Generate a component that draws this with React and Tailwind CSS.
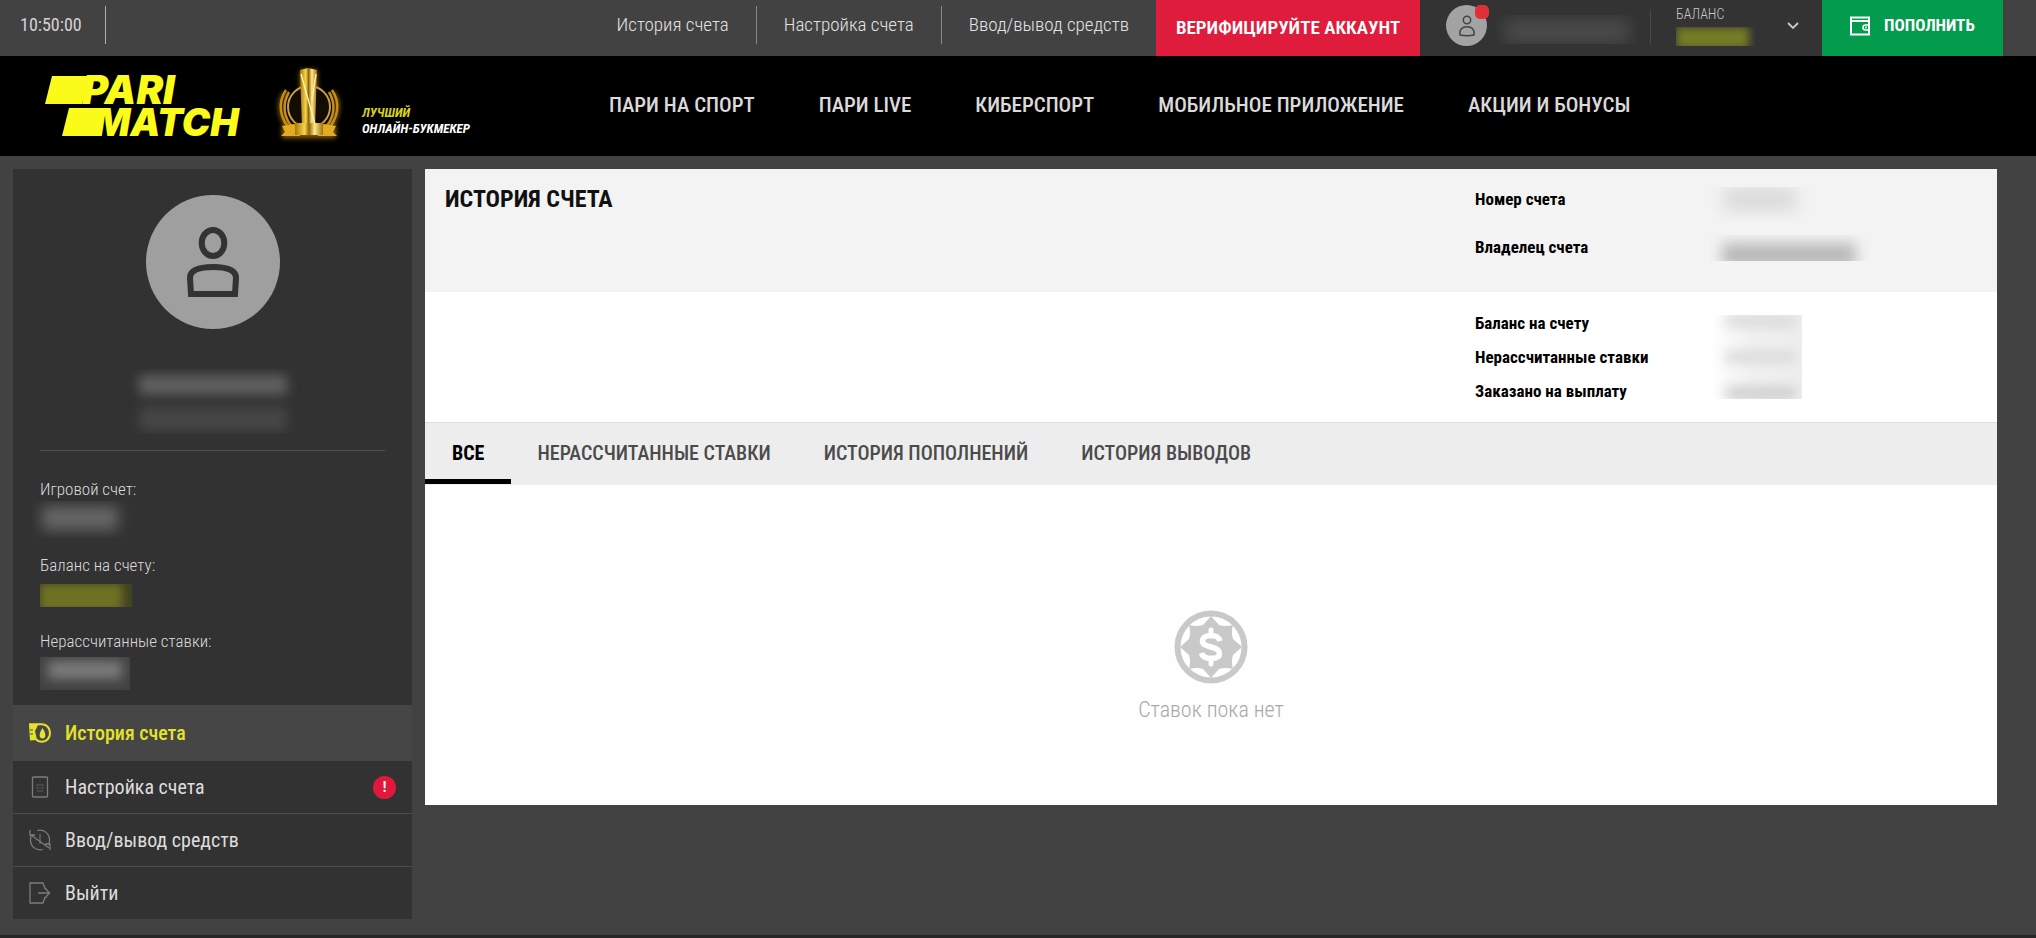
import React from "react";

const topLinks = ["История счета", "Настройка счета", "Ввод/вывод средств"];
const navLinks = ["ПАРИ НА СПОРТ", "ПАРИ LIVE", "КИБЕРСПОРТ", "МОБИЛЬНОЕ ПРИЛОЖЕНИЕ", "АКЦИИ И БОНУСЫ"];
const tabs = ["ВСЕ", "НЕРАССЧИТАННЫЕ СТАВКИ", "ИСТОРИЯ ПОПОЛНЕНИЙ", "ИСТОРИЯ ВЫВОДОВ"];

function Person({ className }) {
  return (
    <svg viewBox="0 0 52 70" className={className} fill="none" stroke="currentColor" strokeWidth="6" aria-hidden="true">
      <ellipse cx="26" cy="16" rx="11.3" ry="13" />
      <path d="M4 67 L3 51 C3 43 12 40 26 40 C40 40 49 43 49 51 L48 67 Z" />
    </svg>
  );
}

function SmallPerson({ className }) {
  return (
    <svg viewBox="0 0 16 22" className={className} fill="none" stroke="currentColor" strokeWidth="1.5" aria-hidden="true">
      <circle cx="8" cy="5" r="3.7" />
      <path d="M1 20 C0.4 14.5 3 11.7 8 11.7 C13 11.7 15.6 14.5 15 20 Q8 21.4 1 20 Z" />
    </svg>
  );
}

function Logo() {
  return (
    <svg viewBox="0 -10 202 84" className="h-[84px] w-[202px] shrink-0 overflow-visible fill-[#fbfb1a]" role="img" aria-label="Parimatch">
      <path d="M8 2 H46 L38 30 H1 Z" />
      <path d="M25 34 H62 L56 62 H18 Z" />
      <text x="38" y="30" className="font-['Inter',sans-serif] text-[40px] font-black italic">PARI</text>
      <text x="50" y="62" className="font-['Inter',sans-serif] text-[38px] font-black italic">MATCH</text>
    </svg>
  );
}

function Trophy() {
  return (
    <svg viewBox="0 0 70 80" className="h-20 w-[70px] shrink-0" aria-hidden="true">
      <defs>
        <linearGradient id="gold" x1="0" x2="1" y1="0" y2="0">
          <stop offset="0" stopColor="#a8780c" />
          <stop offset="0.35" stopColor="#f7d64a" />
          <stop offset="0.5" stopColor="#8f6408" />
          <stop offset="0.7" stopColor="#ffe98a" />
          <stop offset="1" stopColor="#a06e0a" />
        </linearGradient>
        <filter id="glow" x="-20%" y="-20%" width="140%" height="140%">
          <feGaussianBlur stdDeviation="2.4" />
        </filter>
      </defs>
      <g filter="url(#glow)" stroke="#b78410" strokeWidth="3" fill="none">
        <path d="M26 4 H43 L45 60 H62 V72 H8 V60 H26 Z" fill="#8a6208" stroke="none" />
        <path d="M11 26 C3 38 6 52 16 64 M59 26 C67 38 64 52 54 64" />
      </g>
      <circle cx="35" cy="41" r="21" fill="#120c02" stroke="#c9a04a" strokeWidth="2" />
      <path d="M12 24 C3 37 6 53 17 64 M15 26 C8 38 9 52 20 63 M58 24 C67 37 64 53 53 64 M55 26 C62 38 61 52 50 63" fill="none" stroke="#c58c18" strokeWidth="2.5" />
      <path d="M26 4 L34 2 L43 4 L41 62 H28 Z" fill="url(#gold)" />
      <path d="M27 8 L41 58 M42 8 L38 34" stroke="#fff3b0" strokeWidth="1.4" fill="none" />
      <path d="M8 60 L20 58 L26 62 V70 H7 L11 66 Z M62 60 L50 58 L44 62 V70 H63 L59 66 Z" fill="#e2ac20" />
      <path d="M21 57 H49 V69 H21 Z" fill="url(#gold)" />
    </svg>
  );
}

function HistoryIcon() {
  return (
    <svg viewBox="0 0 22 20" className="h-5 w-[22px]" fill="none" stroke="currentColor" aria-hidden="true">
      <path d="M0 1.2 H13 C18 1.4 21 5.5 21 10 C21 15 17.500 18.800 13 18.800 C10 18.800 8 17.500 7 16" strokeWidth="2" />
      <path d="M0 2 H9 L6 8 L8 17 L1 17.500 Z" fill="currentColor" stroke="none" />
      <path d="M1 7 H4 M1 11 H4" stroke="#464646" strokeWidth="1" />
      <path d="M13.500 5 C17 10 17.500 15.500 13.500 15.500 C9.500 15.500 10 10 13.500 5 Z" fill="currentColor" stroke="none" />
    </svg>
  );
}

function SettingsIcon() {
  return (
    <svg viewBox="0 0 22 22" className="size-[22px]" fill="none" stroke="currentColor" aria-hidden="true">
      <rect x="3.500" y="1" width="15" height="20" rx="1" strokeWidth="1.300" />
      <path d="M7 9 H15 M7 12 H10 M12 12 H15 M8 15 H14" strokeWidth="1" opacity="0.6" />
    </svg>
  );
}

function TransferIcon() {
  return (
    <svg viewBox="0 0 22 22" className="size-[22px]" fill="none" stroke="currentColor" strokeWidth="1.300" aria-hidden="true">
      <path d="M1 1 V6 H6 M2 6 L20 19 M21 21 V15 H16" />
      <path d="M8 1.500 C15 -0.500 21 5 20.500 12 C20.400 13.500 20 15 19.300 16 M14 20.500 C7 22.500 1 17 1.500 10 L2 7" />
      <path d="M11 5 V15" strokeWidth="1" />
    </svg>
  );
}

function ExitIcon() {
  return (
    <svg viewBox="0 0 22 22" className="size-[22px]" fill="none" stroke="currentColor" strokeWidth="1.300" aria-hidden="true">
      <path d="M16 7 L14 1 H1 V21 H14 L16 15 M9 11 H20 M16 6 L20.500 11 L16 16" />
    </svg>
  );
}

function WalletIcon() {
  return (
    <svg viewBox="0 0 20 20" className="size-5" fill="none" stroke="currentColor" aria-hidden="true">
      <path d="M1 4 V18.500 H19 V1.500 H1 V5 H19" strokeWidth="2" />
      <path d="M19 9 H15.500 A2.500 2.500 0 0 0 15.500 14 H19" strokeWidth="1.600" />
      <circle cx="16" cy="11.500" r="1" fill="currentColor" stroke="none" />
    </svg>
  );
}

function ChipIcon() {
  return (
    <svg viewBox="0 0 74 74" className="size-[74px]" aria-hidden="true">
      <circle cx="37" cy="37" r="33.500" fill="#fff" stroke="#c9c9c9" strokeWidth="6" />
      <path d="M37 6 L45 15 Q51 17 59 15 Q57 23 59 29 L68 37 L59 45 Q57 51 59 59 Q51 57 45 59 L37 68 L29 59 Q23 57 15 59 Q17 51 15 45 L6 37 L15 29 Q17 23 15 15 Q23 17 29 15 Z" fill="#c9c9c9" />
      <path d="M46 31 C45 27 42 25.500 37 25.500 C31.500 25.500 28.500 28 28.500 31 C28.500 34.500 31.500 35.500 37 37 C43 38.500 45.500 40 45.500 43.500 C45.500 47 42 48.500 37 48.500 C32 48.500 28.500 47 27.500 43" fill="none" stroke="#fff" strokeWidth="5.500" />
      <path d="M37 20 V26 M37 48 V54" stroke="#fff" strokeWidth="5" strokeLinecap="round" />
    </svg>
  );
}

const menu = [
  { label: "История счета", Icon: HistoryIcon },
  { label: "Настройка счета", Icon: SettingsIcon, badge: true },
  { label: "Ввод/вывод средств", Icon: TransferIcon },
  { label: "Выйти", Icon: ExitIcon },
];

function TopBar() {
  return (
    <div className="flex h-14 items-stretch pr-[33px]">
      <div className="flex flex-1 items-start pt-[6px]">
        <time className="h-[38px] w-[106px] border-r border-[#b0b0b0] pl-5 text-[18px] leading-[38px] text-[#d4d4d4]">10:50:00</time>
      </div>
      <nav className="flex items-start pt-[6px] text-[19px] leading-[38px] font-light text-[#e2e2e2]" aria-label="Аккаунт">
        {topLinks.map((label, i) => (
          <a key={label} href="#" className={"px-[27px] whitespace-nowrap " + (i ? "border-l border-[#8a8a8a]" : "")}>{label}</a>
        ))}
      </nav>
      <button className="w-[264px] bg-[#e01c3c] text-[19px] font-semibold text-white">ВЕРИФИЦИРУЙТЕ АККАУНТ</button>
      <button className="flex w-[402px] items-start bg-[#333333] pl-[26px] text-left text-[#c8c8c8]" aria-label="Меню аккаунта">
        <span className="relative mt-[5px] flex size-[41px] items-center justify-center rounded-full bg-[#a3a3a3]">
          <SmallPerson className="h-[22px] w-4 text-[#444444]" />
          <span className="absolute top-0 -right-[2px] size-[14px] rounded-[5px] bg-[#e12f3a]" />
        </span>
        <span className="mt-[15px] ml-[8px] h-[29px] w-[144px] overflow-hidden">
          <span className="mx-[10px] mt-[4px] block h-6 rounded bg-[#4b4b4b] blur-[8px]" />
        </span>
        <span className="mt-[10px] ml-[11px] h-[35px] w-px bg-[#4a4a4a]" />
        <span className="ml-[25px] flex w-[79px] flex-col pt-[6px] text-[14px] leading-4 font-light">
          БАЛАНС
          <span className="mt-[5px] block h-[19px] overflow-hidden">
            <span className="mr-[6px] block h-[22px] bg-[#767b26] blur-[4px]" />
          </span>
        </span>
        <svg viewBox="0 0 12 8" className="mt-[22px] ml-[32px] h-2 w-3" fill="none" stroke="currentColor" strokeWidth="1.800" aria-hidden="true">
          <path d="M1 1 L6 6 L11 1" />
        </svg>
      </button>
      <button className="flex w-[181px] items-center gap-[14px] bg-[#039b4c] pb-[5px] pl-7 text-[17px] font-bold text-white">
        <WalletIcon />
        ПОПОЛНИТЬ
      </button>
    </div>
  );
}

function Stat({ label, children }) {
  return (
    <div>
      <dt className="text-[17px] leading-6 font-light text-[#dadada]">{label}</dt>
      <dd className="flex h-[52px] items-start">{children}</dd>
    </div>
  );
}

function Sidebar() {
  return (
    <aside className="w-[399px] shrink-0 bg-[#323232]">
      <div className="flex h-[536px] flex-col px-[27px] pt-[26px]">
        <div className="flex size-[134px] items-center justify-center self-center rounded-full bg-[#9f9f9f]">
          <Person className="h-[70px] w-[52px] text-[#333333]" />
        </div>
        <div className="mt-[40px] h-[65px] w-[180px] self-center overflow-hidden">
          <div className="mx-4 mt-[6px] h-5 rounded bg-[#606060] blur-[6px]" />
          <div className="mx-4 mt-3 h-6 rounded bg-[#464646] blur-[6px]" />
        </div>
        <div className="mt-4 border-t border-[#505050]" />
        <dl className="pt-[26px]">
          <Stat label="Игровой счет:">
            <div className="-ml-2 h-[37px] w-[104px] overflow-hidden"><div className="mt-[5px] ml-[10px] h-6 w-[76px] bg-[#666666] blur-[7px]" /></div>
          </Stat>
          <Stat label="Баланс на счету:">
            <div className="mt-[7px] h-[23px] w-[92px] overflow-hidden bg-[#424321]"><div className="h-[27px] w-[82px] bg-[#6f7224] blur-[4px]" /></div>
          </Stat>
          <Stat label="Нерассчитанные ставки:">
            <div className="mt-[4px] h-[33px] w-[90px] overflow-hidden bg-[#424242]"><div className="mx-[8px] mt-[4px] h-[18px] bg-[#7c7c7c] blur-[6px]" /></div>
          </Stat>
        </dl>
      </div>
      <nav aria-label="Личный кабинет">
        {menu.map(({ label, Icon, badge }, i) => (
          <a
            key={label}
            href="#"
            className={
              "flex items-center gap-[14px] pr-4 pl-4 text-[20px] " +
              (i === 0
                ? "h-14 bg-[#464646] font-medium text-[#e5e22a]"
                : i === 1
                  ? "h-[52px] text-[#dddddd]"
                  : "h-[53px] border-t border-[#4d4d4d] text-[#dddddd]")
            }
          >
            <span className={"flex w-[22px] justify-center " + (i === 0 ? "" : "text-[#7c7c7c]")}><Icon /></span>
            {label}
            {badge && (
              <span className="ml-auto flex size-[23px] items-center justify-center rounded-full bg-[#e0193c] text-[14px] font-bold text-white">!</span>
            )}
          </a>
        ))}
      </nav>
    </aside>
  );
}

function Main() {
  return (
    <main className="min-w-0 flex-1 self-start bg-white text-black">
      <header className="flex h-[123px] justify-between bg-[#f3f3f3] pt-4 pl-5">
        <h1 className="text-[24px] leading-7 font-bold text-[#111111]">ИСТОРИЯ СЧЕТА</h1>
        <dl className="grid w-[522px] grid-cols-[235px_1fr] content-start gap-y-6 pt-[2px] text-[17px] leading-6">
          <dt className="font-bold">Номер счета</dt>
          <dd className="h-6"><div className="h-[34px] w-[104px] overflow-hidden"><div className="mr-[18px] ml-[14px] h-6 bg-[#dadada] blur-[8px]" /></div></dd>
          <dt className="font-bold">Владелец счета</dt>
          <dd className="h-6">
            <div className="h-[26px] w-[180px] overflow-hidden">
              <div className="mt-[8px] ml-3 h-6 w-[134px] bg-[#b9b9b9] blur-[7px]" />
            </div>
          </dd>
        </dl>
      </header>
      <div className="flex h-[130px] justify-end pt-[19px]">
        <dl className="grid w-[522px] grid-cols-[235px_1fr] content-start gap-y-[10px] text-[17px] leading-6">
          <dt className="font-bold">Баланс на счету</dt>
          <dd className="row-span-3">
            <div className="mt-[4px] flex h-[84px] w-[92px] flex-col justify-between overflow-hidden bg-gradient-to-r from-white via-[#f0f0f0] to-[#eeeeee]">
              <div className="mr-[6px] ml-[16px] h-3 bg-[#dadada] blur-[6px]" />
              <div className="mr-[6px] ml-[16px] h-3 bg-[#dadada] blur-[6px]" />
              <div className="mr-[6px] ml-[16px] h-3 bg-[#cccccc] blur-[6px]" />
            </div>
          </dd>
          <dt className="font-bold">Нерассчитанные ставки</dt>
          <dt className="font-bold">Заказано на выплату</dt>
        </dl>
      </div>
      <div role="tablist" className="flex h-[63px] gap-[53px] border-t border-[#dddddd] bg-[#ededed] text-[20px]">
        {tabs.map((label, i) => (
          <button
            key={label}
            role="tab"
            aria-selected={i === 0}
            className={
              "h-[61px] " +
              (i === 0
                ? "-mr-[27px] border-b-[5px] border-black pt-[3px] pr-[27px] pl-[27px] font-bold text-black"
                : "pb-[2px] font-medium text-[#4b4b4b]")
            }
          >
            {label}
          </button>
        ))}
      </div>
      <div className="flex h-[320px] flex-col items-center bg-[#fefefe] pt-[125px]">
        <ChipIcon />
        <p className="mt-3 text-[22px] leading-7 font-light text-[#a8a8a8]">Ставок пока нет</p>
      </div>
    </main>
  );
}

export default function App() {
  return (
    <div className="flex min-h-screen flex-col bg-[#424242] font-['Roboto_Condensed','Liberation_Sans_Narrow',Roboto,sans-serif]">
      <TopBar />
      <div className="flex h-[100px] shrink-0 items-center bg-black pl-11">
        <Logo />
        <div className="ml-[28px]"><Trophy /></div>
        <p className="mt-[30px] ml-[18px] w-[230px] text-[13px] leading-4 font-bold text-white italic">
          <span className="block text-[#d8d31e]">ЛУЧШИЙ</span>
          ОНЛАЙН-БУКМЕКЕР
        </p>
        <nav className="ml-[17px] flex gap-16 text-[21px] font-medium whitespace-nowrap text-[#dadada]" aria-label="Основное меню">
          {navLinks.map((label) => (
            <a key={label} href="#">{label}</a>
          ))}
        </nav>
      </div>
      <div className="flex flex-1 gap-[13px] pt-[13px] pr-[39px] pb-4 pl-[13px]">
        <Sidebar />
        <Main />
      </div>
      <footer className="h-1 bg-[#262626]" />
    </div>
  );
}
